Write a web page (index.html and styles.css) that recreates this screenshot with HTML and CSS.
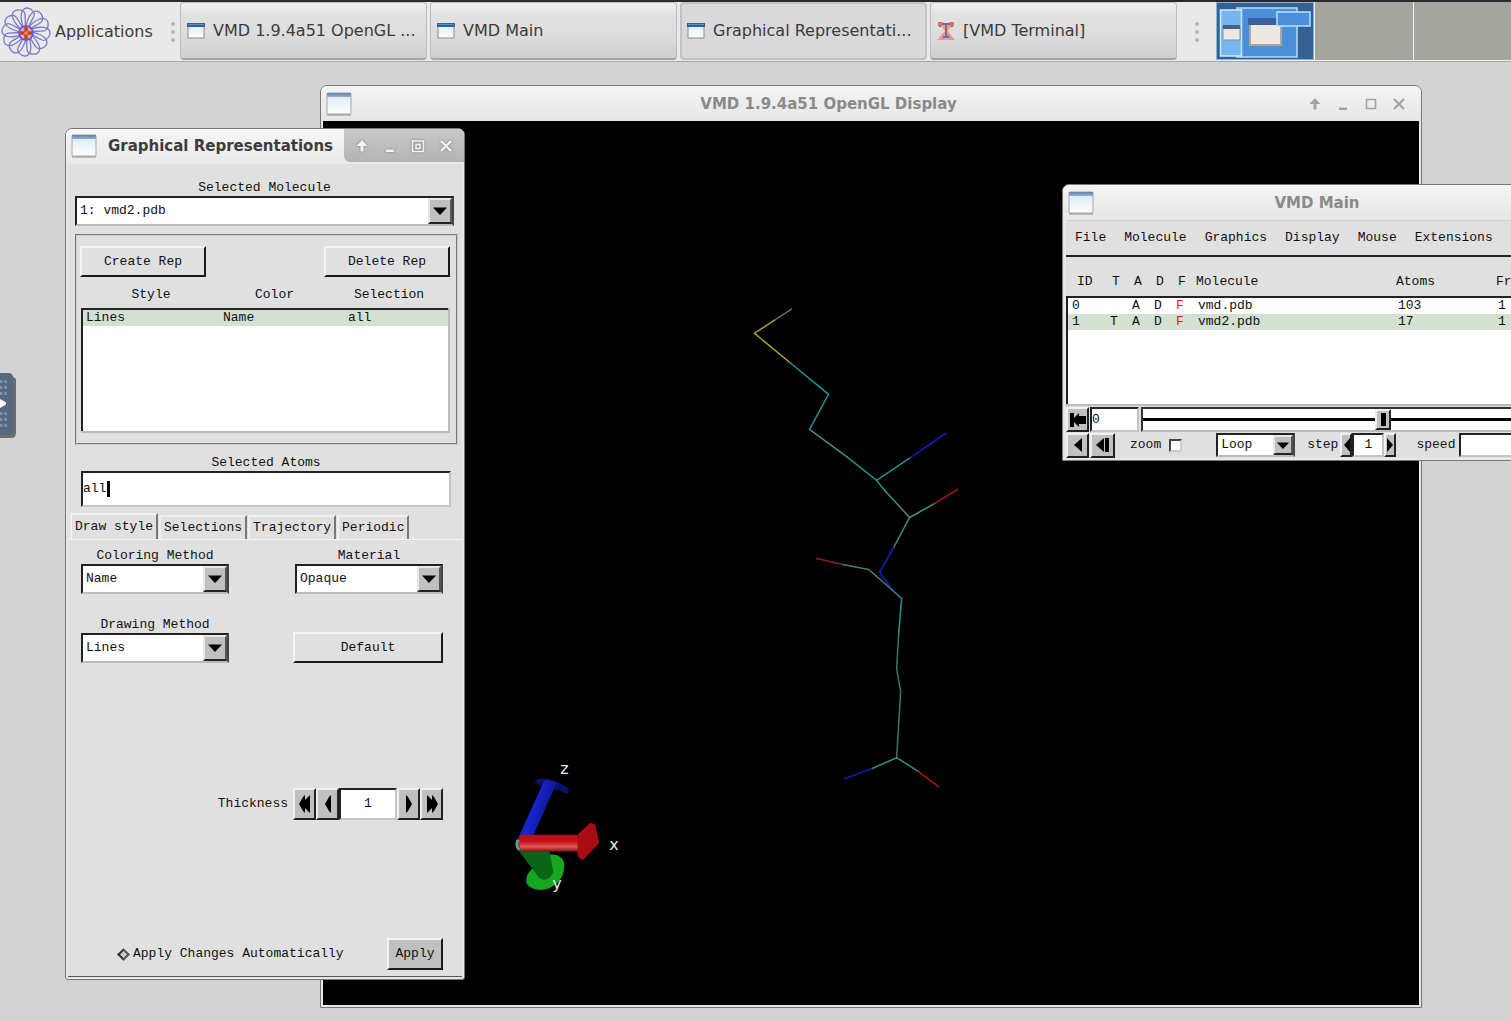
FILE: index.html
```html
<!DOCTYPE html>
<html lang="en">
<head>
<meta charset="utf-8">
<title>VMD Desktop</title>
<link rel="stylesheet" href="styles.css">
</head>
<body>
<svg class="defs" width="0" height="0" aria-hidden="true">
  <defs>
    <linearGradient id="glass" x1="0" y1="0" x2="0" y2="1"><stop offset="0" stop-color="#d8ecf6"/><stop offset="1" stop-color="#fdfdfc"/></linearGradient>
    <linearGradient id="winbar" x1="0" y1="0" x2="0" y2="1"><stop offset="0" stop-color="#5f82ad"/><stop offset="1" stop-color="#9ab0cc"/></linearGradient>
    <symbol id="win-small" viewBox="0 0 18 16"><rect x="1" y="1" width="16" height="14" fill="url(#glass)" stroke="#8c8c88"/><rect x="0" y="0" width="18" height="4" fill="#33628f"/><rect x="1" y="1" width="16" height="1" fill="#5d91c0"/></symbol>
    <symbol id="win-large" viewBox="0 0 26 24"><rect x="1" y="1" width="24" height="21" rx="1" fill="url(#glass)" stroke="#a5a7a4"/><rect x="1" y="1" width="24" height="4" fill="url(#winbar)"/><path d="M1 23h24" stroke="#8b8d8a"/></symbol>
    <symbol id="shade" viewBox="0 0 14 14"><path d="M7 1 1.500 7h4v5.500h3V7h4Z" fill="currentColor"/></symbol>
    <symbol id="minimize" viewBox="0 0 14 14"><path d="M3 10.500h8v2.500H3z" fill="currentColor"/></symbol>
    <symbol id="maximize" viewBox="0 0 14 14"><path d="M2.500 2.500h9v9h-9z" fill="none" stroke="currentColor" stroke-width="1.500"/></symbol>
    <symbol id="restore" viewBox="0 0 14 14"><path d="M1.500 2h11v10.500h-11zM5 5.500h4v4H5z" fill="none" stroke="currentColor" stroke-width="1.500"/></symbol>
    <symbol id="close" viewBox="0 0 14 14"><path d="m2 2 10 10m0-10L2 12" fill="none" stroke="currentColor" stroke-width="2.300"/></symbol>
    <symbol id="drop" viewBox="0 0 16 10"><path d="M1 1.500h14L8 9Z" fill="#000"/></symbol>
    <symbol id="prev" viewBox="0 0 8 20"><path d="M7 1v18L5 17 1 10 5 3Z" fill="#000"/></symbol>
    <symbol id="next" viewBox="0 0 8 20"><path d="M1 1v18l2-2 4-7-4-7Z" fill="#000"/></symbol>
    <symbol id="first" viewBox="0 0 12 20"><path d="M6 1v5l5-5v18l-5-5v5L4 17 0 10 4 3Z" fill="#000"/></symbol>
    <symbol id="last" viewBox="0 0 12 20"><path d="M6 1v5L1 1v18l5-5v5l2-2 4-7-4-7Z" fill="#000"/></symbol>
  </defs>
</svg>

<header class="panel">
  <button class="apps" type="button">
    <svg class="apps-logo" viewBox="0 0 52 50" aria-hidden="true">
      <g fill="none" stroke="#7b7ac8" stroke-width="1.300">
        <path id="petal" d="M26 25C20 16 20 5 24 2s12 2 10 7-6 10-8 16"/>
        <use href="#petal" transform="rotate(30 26 25)"/><use href="#petal" transform="rotate(60 26 25)"/><use href="#petal" transform="rotate(90 26 25)"/><use href="#petal" transform="rotate(120 26 25)"/><use href="#petal" transform="rotate(150 26 25)"/><use href="#petal" transform="rotate(180 26 25)"/><use href="#petal" transform="rotate(210 26 25)"/><use href="#petal" transform="rotate(240 26 25)"/><use href="#petal" transform="rotate(270 26 25)"/><use href="#petal" transform="rotate(300 26 25)"/><use href="#petal" transform="rotate(330 26 25)"/>
      </g>
      <circle cx="26" cy="26" r="7" fill="#e3a5b5" stroke="#5553d8" stroke-width="1.500"/>
      <path d="M26 20v12M20 26h12" stroke="#c2402c" stroke-width="3.500"/><circle cx="26" cy="26" r="2" fill="#e88b2c"/>
    </svg>
    <span>Applications</span>
  </button>
  <span class="grip"><i></i><i></i><i></i></span>
  <nav class="tasks" aria-label="Windows">
    <button class="task" type="button"><svg width="18" height="16"><use href="#win-small"/></svg><span>VMD 1.9.4a51 OpenGL ...</span></button>
    <button class="task" type="button"><svg width="18" height="16"><use href="#win-small"/></svg><span>VMD Main</span></button>
    <button class="task active" type="button"><svg width="18" height="16"><use href="#win-small"/></svg><span>Graphical Representati...</span></button>
    <button class="task" type="button"><svg width="18" height="20" viewBox="0 0 18 20"><path d="M1 1l7 9-7 9h5l3-5 3 5h5l-6-9 6-9h-5L9 6 6 1Z" fill="#f0a36c"/><path d="M0 19l6-7h6l6 7Z" fill="#e58b9c" opacity=".6"/><path d="M2 2h14v4h-2l-1-2h-3v11h2v2H6v-2h2V4H5L4 6H2Z" fill="#7069b4"/><path d="M1 1h4v4H1zM13 1h4v4h-4z" fill="#e06a6a"/></svg><span>[VMD Terminal]</span></button>
  </nav>
  <span class="grip"><i></i><i></i><i></i></span>
  <div class="pager">
    <button class="desk current" type="button" aria-label="Workspace 1">
      <svg viewBox="0 0 98 57" width="98" height="57">
        <path d="M20 5h60v49H20z" fill="#4a90d9" stroke="#b4dcfa" stroke-width="1.500"/>
        <path d="M3.500 7h21v46h-21z" fill="#78b4ee" stroke="#d0eaff" stroke-width="1.500"/>
        <path d="M6 23h17v14H6z" fill="#ece8e2" stroke="#8793a4"/><path d="M6 22h17v4H6z" fill="#41618f"/>
        <path d="M33 17h31v25H33z" fill="#ece7e1" stroke="#a9a59f" stroke-width="2"/><path d="M31 15h34v7H31z" fill="#395f9f"/>
        <path d="M60 9h33v14H60z" fill="#4a90d9" stroke="#b9e0ff" stroke-width="1.500"/>
      </svg>
    </button>
    <button class="desk" type="button" aria-label="Workspace 2"></button>
    <button class="desk" type="button" aria-label="Workspace 3"></button>
  </div>
</header>

<main class="desktop">
  <section class="window display" aria-label="OpenGL Display">
    <div class="titlebar">
      <svg width="26" height="24"><use href="#win-large"/></svg>
      <h2>VMD 1.9.4a51 OpenGL Display</h2>
      <div class="controls">
        <button type="button" aria-label="Shade"><svg><use href="#shade"/></svg></button>
        <button type="button" aria-label="Minimize"><svg><use href="#minimize"/></svg></button>
        <button type="button" aria-label="Maximize"><svg><use href="#maximize"/></svg></button>
        <button type="button" aria-label="Close"><svg><use href="#close"/></svg></button>
      </div>
    </div>
    <svg class="scene" viewBox="323 121 1096 883" preserveAspectRatio="xMinYMin slice">
      <defs>
        <linearGradient id="red" x1="0" y1="0" x2="0" y2="1"><stop offset="0" stop-color="#ad1016"/><stop offset=".4" stop-color="#cb1016"/><stop offset=".7" stop-color="#dc5a5a"/><stop offset="1" stop-color="#7c0a0e"/></linearGradient>
        <linearGradient id="blue" x1="0" y1="0" x2="1" y2=".5"><stop offset="0" stop-color="#0a1280"/><stop offset=".5" stop-color="#1825cc"/><stop offset="1" stop-color="#0a1280"/></linearGradient>
      </defs>
      <g fill="none" stroke-width="1.500" stroke-linecap="round">
        <path d="m791 309-17 11" stroke="#4b7670"/>
        <path d="m774 320-20 13 35 29" stroke="#b2a136"/>
        <path d="m789 362 39 32-19 35" stroke="#238f91"/>
        <path d="m809 429 38 28" stroke="#4d8980"/>
        <path d="m847 457 29 23 34-23M876 480l9 11" stroke="#23908f"/>
        <path d="m910 457 35-24" stroke="#14149c" stroke-width="2"/>
        <path d="m885 491 24 26 25-14M909 517l-16 30" stroke="#4b8b7e"/>
        <path d="m934 503 23-14" stroke="#a91c22"/>
        <path d="m893 547-14 25 12 16" stroke="#171a91" stroke-width="2"/>
        <path d="m816 558 26 6" stroke="#8f1d22"/>
        <path d="m842 564 26 5 23 20" stroke="#457c6d"/>
        <path d="m891 589 10 9-3 36" stroke="#259193"/>
        <path d="m898 634-2 34 4 23-4 66" stroke="#3e7565"/>
        <path d="m896 757-25 11M896 757l22 14" stroke="#348c85"/>
        <path d="m871 768-27 10" stroke="#1717b5"/>
        <path d="m918 771 20 15" stroke="#c01616"/>
      </g>
      <path d="M534 781q10-9 35 7l-2 5-10-4-10 1Z" fill="#0a106c"/>
      <path d="m517 839 27-59q8-2 12 3l-26 59Z" fill="url(#blue)"/>
      <path d="M526 880c0-9 7-12 12-18l10-8c9-2 17 3 16 12-1 15-13 24-26 23-7-1-12-4-12-9Z" fill="#17a620"/>
      <path d="m517 848 32 2 4 21c-2 7-10 11-15 5Z" fill="#086616"/>
      <path d="M520 834h58v17h-56q-6-8-2-17Z" fill="url(#red)"/>
      <path d="m578 833 12-11 5 2 4 18-16 17q-5 0-6-7Z" fill="#a80d13"/>
      <path d="M518 839q-3 5 1 10" stroke="#739a94" stroke-width="3" fill="none"/>
      <g class="axis"><text x="560" y="773">z</text><text x="609" y="849">x</text><text x="552" y="888">y</text></g>
    </svg>
  </section>

  <section class="window vmd-main" aria-label="VMD Main">
    <div class="titlebar">
      <svg width="26" height="24"><use href="#win-large"/></svg>
      <h2>VMD Main</h2>
      <div class="controls">
        <button type="button" aria-label="Shade"><svg><use href="#shade"/></svg></button>
        <button type="button" aria-label="Minimize"><svg><use href="#minimize"/></svg></button>
        <button type="button" aria-label="Maximize"><svg><use href="#maximize"/></svg></button>
        <button type="button" aria-label="Close"><svg><use href="#close"/></svg></button>
      </div>
    </div>
    <div class="main-body">
      <nav class="menubar"><button type="button">File</button><button type="button">Molecule</button><button type="button">Graphics</button><button type="button">Display</button><button type="button">Mouse</button><button type="button">Extensions</button></nav>
      <table class="mols">
        <colgroup><col class="c-id"><col class="c-flag"><col class="c-flag"><col class="c-flag"><col class="c-flag"><col class="c-mol"><col class="c-atoms"><col></colgroup>
        <thead><tr><th>ID</th><th>T</th><th>A</th><th>D</th><th>F</th><th>Molecule</th><th>Atoms</th><th>Frames</th></tr></thead>
        <tbody>
          <tr><td>0</td><td></td><td>A</td><td>D</td><td class="fixed">F</td><td>vmd.pdb</td><td>103</td><td>1</td></tr>
          <tr class="selected"><td>1</td><td>T</td><td>A</td><td>D</td><td class="fixed">F</td><td>vmd2.pdb</td><td>17</td><td>1</td></tr>
          <tr class="filler"><td colspan="8"></td></tr>
        </tbody>
      </table>
      <div class="frame-row">
        <button class="key" type="button" aria-label="Jump to start"><svg width="16" height="14" viewBox="0 0 16 14"><path d="M0 0h4v5l5-5v3h7v8H9v3L4 9v5H0Z"/></svg></button>
        <input class="field frame" type="text" value="0" aria-label="Frame">
        <input class="slider" type="range" min="0" max="200" value="99" aria-label="Frame slider">
        <button class="key" type="button" aria-label="Jump to end"><svg width="16" height="14" viewBox="0 0 16 14"><path d="M16 0h-4v5L7 0v3H0v8h7v3l5-5v5h4Z"/></svg></button>
      </div>
      <div class="play-row">
        <button class="key" type="button" aria-label="Play reverse"><svg width="8" height="14" viewBox="0 0 8 14"><path d="M8 0v14L0 7Z"/></svg></button>
        <button class="key step-key" type="button" aria-label="Step reverse"><svg width="13" height="14" viewBox="0 0 13 14"><path d="M8 0v14L0 7ZM9 0h4v14H9Z"/></svg></button>
        <label class="zoom">zoom <input type="checkbox"></label>
        <div class="combo loop"><select aria-label="Loop mode"><option>Loop</option></select><span class="drop"><svg width="14" height="9"><use href="#drop"/></svg></span></div>
        <label for="step">step</label>
        <div class="stepper">
          <button class="key" type="button" aria-label="Decrease step"><svg width="7" height="14" viewBox="0 0 7 14"><path d="M7 0v14L1 7Z"/></svg></button>
          <input id="step" class="field" type="text" value="1">
          <button class="key" type="button" aria-label="Increase step"><svg width="7" height="14" viewBox="0 0 7 14"><path d="M0 0v14l6-7Z"/></svg></button>
        </div>
        <label class="speed">speed <input class="field" type="text"></label>
      </div>
    </div>
  </section>

  <section class="window reps" aria-label="Graphical Representations">
    <div class="titlebar focused">
      <svg width="26" height="24"><use href="#win-large"/></svg>
      <h2>Graphical Representations</h2>
      <div class="controls">
        <button type="button" aria-label="Shade"><svg><use href="#shade"/></svg></button>
        <button type="button" aria-label="Minimize"><svg><use href="#minimize"/></svg></button>
        <button type="button" aria-label="Maximize"><svg><use href="#restore"/></svg></button>
        <button type="button" aria-label="Close"><svg><use href="#close"/></svg></button>
      </div>
    </div>
    <div class="reps-body">
      <div class="labelled molecule">
        <label for="mol">Selected Molecule</label>
        <div class="combo"><select id="mol"><option>1: vmd2.pdb</option></select><span class="drop"><svg width="16" height="10"><use href="#drop"/></svg></span></div>
      </div>
      <div class="group">
        <div class="spread"><button class="btn" type="button">Create Rep</button><button class="btn" type="button">Delete Rep</button></div>
        <table class="rep-table">
          <colgroup><col class="c-style"><col class="c-color"><col></colgroup>
          <thead><tr><th>Style</th><th>Color</th><th>Selection</th></tr></thead>
          <tbody><tr class="selected"><td>Lines</td><td>Name</td><td>all</td></tr><tr class="filler"><td colspan="3"></td></tr></tbody>
        </table>
      </div>
      <div class="labelled atoms">
        <label for="atoms">Selected Atoms</label>
        <div class="field entry"><input id="atoms" type="text" value="all" size="3"><i class="caret"></i></div>
      </div>
      <div class="tabs" role="tablist">
        <button class="on" type="button" role="tab" aria-selected="true">Draw style</button><button type="button" role="tab">Selections</button><button type="button" role="tab">Trajectory</button><button type="button" role="tab">Periodic</button>
      </div>
      <div class="tab-page">
        <div class="spread">
          <div class="labelled small"><label for="coloring">Coloring Method</label><div class="combo"><select id="coloring"><option>Name</option></select><span class="drop"><svg width="16" height="10"><use href="#drop"/></svg></span></div></div>
          <div class="labelled small"><label for="material">Material</label><div class="combo"><select id="material"><option>Opaque</option></select><span class="drop"><svg width="16" height="10"><use href="#drop"/></svg></span></div></div>
        </div>
        <div class="spread bottom">
          <div class="labelled small"><label for="drawing">Drawing Method</label><div class="combo"><select id="drawing"><option>Lines</option></select><span class="drop"><svg width="16" height="10"><use href="#drop"/></svg></span></div></div>
          <button class="btn default" type="button">Default</button>
        </div>
        <div class="thickness">
          <label for="thick">Thickness</label>
          <div class="counter">
            <button class="key" type="button" aria-label="Much thinner"><svg width="12" height="20"><use href="#first"/></svg></button>
            <button class="key" type="button" aria-label="Thinner"><svg width="8" height="20"><use href="#prev"/></svg></button>
            <input id="thick" class="field" type="text" value="1">
            <button class="key" type="button" aria-label="Thicker"><svg width="8" height="20"><use href="#next"/></svg></button>
            <button class="key" type="button" aria-label="Much thicker"><svg width="12" height="20"><use href="#last"/></svg></button>
          </div>
        </div>
        <div class="apply-row">
          <label><input type="checkbox">Apply Changes Automatically</label>
          <button class="btn apply" type="button">Apply</button>
        </div>
      </div>
    </div>
  </section>

  <button class="dock-handle" type="button" aria-label="Open control bar">
    <svg width="16" height="66" viewBox="0 0 16 66"><path d="M0 3h12l4 3v54q0 5-5 5H0Z" fill="#6d6d6d"/><path d="M0 0h8q5 0 5 5v52q0 5-5 5H0Z" fill="#54687f"/><g stroke="#8495a7" stroke-width="2.500" stroke-dasharray="3 3"><path d="M1 7v15M5.500 7v15M1 39v15M5.500 39v15"/></g><path d="M0 26l6 3.500v2L0 35Z" fill="#fff"/></svg>
  </button>
</main>
</body>
</html>
```
FILE: styles.css
```css
* { box-sizing: border-box; }

body {
  margin: 0;
  height: 100vh;
  overflow: hidden;
  display: flex;
  flex-direction: column;
  background: #d3d3d3;
  color: #111;
  font: 13px/16px "Liberation Mono", monospace;
}

button, input, select { font: inherit; color: inherit; margin: 0; padding: 0; border: 0; border-radius: 0; background: none; }
select { appearance: none; min-width: 0; }
svg { display: block; flex: none; }
.defs { position: absolute; }

/* Desktop panel */
.panel {
  display: flex;
  flex: none;
  height: 62px;
  border-top: 2px solid #2c282d;
  border-bottom: 1px solid #a6a6a2;
  background: #e9e9e9;
  font: 16px/20px "DejaVu Sans", sans-serif;
  color: #3b3b3b;
}
.apps { display: flex; align-items: center; gap: 3px; width: 168px; flex: none; }
.apps-logo { width: 52px; height: 50px; }
.grip { display: flex; flex-direction: column; justify-content: center; gap: 4px; width: 10px; flex: none; align-items: center; }
.grip i { width: 4px; height: 4px; border-radius: 2px; background: #b5b5b1; }
.tasks { display: flex; gap: 3px; padding: 0 0 1px 2px; }
.task {
  display: flex;
  align-items: center;
  gap: 8px;
  width: 247px;
  padding: 0 6px;
  border: 1px solid #bcbcba;
  border-bottom: 2px solid #a5a5a3;
  border-radius: 4px;
  background: linear-gradient(#efefef, #e2e2e2 20%, #dcdcdc 60%, #cfcfcf);
  white-space: nowrap;
  overflow: hidden;
}
.task.active { background: #d9d9d9; border: 2px solid #c2c2c0; padding: 0 5px; }
.tasks + .grip { width: 39px; }
.pager { display: flex; gap: 1px; flex: 1; min-width: 0; overflow: hidden; background: #eee; }
.desk { width: 98px; flex: none; background: #a4a59e; margin-bottom: 1px; }
.desk.current { background: #366092; border: 1px solid #80b6e2; }

/* Window frames */
.desktop { flex: 1; min-height: 0; }
.window {
  position: absolute;
  display: flex;
  flex-direction: column;
  padding: 0 2px 2px;
  border: 1px solid #777;
  border-radius: 7px 7px 0 0;
  background: #e8e8e8;
  overflow: hidden;
}
.display { left: 320px; right: 89px; top: 85px; bottom: 13px; }
.vmd-main { left: 1062px; width: 595px; top: 184px; }
.reps { left: 65px; width: 400px; top: 128px; border-bottom-left-radius: 3px; border-bottom-right-radius: 3px; }

.titlebar {
  display: flex;
  align-items: center;
  flex: none;
  height: 35px;
  margin: 0 -2px;
  padding-left: 5px;
  background: linear-gradient(#f4f4f4, #e6e6e6);
  color: #8a8a88;
}
.titlebar h2 { flex: 1; margin: 0; text-align: center; font: bold 15px/20px "DejaVu Sans", sans-serif; white-space: nowrap; }
.controls { display: flex; align-items: center; gap: 8px; padding-right: 12px; color: #a3a3a1; }
.controls button { width: 20px; height: 20px; display: grid; place-items: center; }
.controls svg { width: 14px; height: 14px; }
.focused { color: #3c3c3c; align-items: flex-start; background: linear-gradient(#f6f6f6, #e9e9e9); }
.focused > svg { margin-top: 5px; }
.focused h2 { margin-top: 7px; }
.focused .controls { height: 33px; padding: 0 8px; background: linear-gradient(#c9c9c9, #b3b3b3); color: #f4f4f4; border-bottom-left-radius: 6px; }
.focused .controls svg { filter: drop-shadow(0 0 1px #777); }

.scene { flex: 1; width: 100%; min-height: 0; background: #000; }
.axis { fill: #e8e8e8; font: 16px "DejaVu Sans", sans-serif; }

/* Shared toolkit widgets */
.btn { border: 2px solid; border-color: #f4f4f4 #1a1a1a #1a1a1a #f4f4f4; background: #e0e0e0; height: 31px; width: 126px; }
.key { display: grid; place-items: center; flex: none; border: 2px solid; border-color: #f0f0f0 #222 #222 #f0f0f0; background: #c0c0c0; }
.field { border: 2px solid; border-color: #222 #c4c4c4 #c4c4c4 #222; background: #fff; min-width: 0; }
.combo { display: flex; height: 30px; border: 2px solid; border-color: #222 #444 #bbb #222; background: #fff; }
.combo select { flex: 1; padding-left: 3px; }
.drop { display: grid; place-items: center; width: 24px; border: 2px solid; border-color: #e8e8e8 #555 #222 #e8e8e8; background: #c0c0c0; }
table { width: 100%; border-collapse: collapse; table-layout: fixed; }
th, td { padding: 0 0 0 3px; font-weight: normal; text-align: left; white-space: nowrap; height: 16px; }
tbody { border: 2px solid; border-color: #222 #bbb #bbb #222; background: #fff; }
.selected { background: #d3e1d3; }

/* Graphical Representations */
.reps-body { background: #e0e0e0; border-bottom: 1px solid #555; padding: 16px 0 0; }
.labelled { display: flex; flex-direction: column; text-align: center; }
.molecule { margin: 0 8px 0 7px; }
.spread { display: flex; justify-content: space-between; }
.group { margin: 8px 4px 0 7px; padding: 10px 6px 10px 3px; border: 2px groove #ccc; }
.rep-table { margin: 10px 0 0 1px; width: 369px; }
.rep-table th { text-align: center; height: 22px; vertical-align: top; padding: 0; }
.rep-table .filler td { height: 106px; }
.rep-table .selected td:last-child { padding-left: 19px; }
.c-style { width: 138px; }
.c-color { width: 109px; }
.atoms { margin: 10px 11px 0 13px; }
.entry { display: flex; align-items: center; height: 36px; }
.entry input { width: 24px; outline: 0; }
.caret { width: 3px; height: 16px; background: #000; }
.tabs { display: flex; align-items: flex-end; gap: 1px; height: 32px; padding-left: 2px; }
.tabs button { height: 24px; padding: 0 3px 1px; border: 2px solid #efefef; border-right-color: #777; border-bottom: 0; }
.tabs .on { height: 26px; }
.tab-page { border-top: 1px solid #f4f4f4; padding: 8px 19px 6px 13px; }
.small { width: 148px; }
.bottom { align-items: flex-end; margin-top: 23px; }
.default { width: 150px; }
.thickness { display: flex; justify-content: flex-end; align-items: center; gap: 5px; margin-top: 125px; }
.counter { display: flex; height: 32px; }
.counter .key { width: 23px; }
.counter .field { width: 58px; text-align: center; }
.apply-row { display: flex; align-items: center; justify-content: space-between; margin-top: 118px; padding-left: 38px; }
.apply-row label { display: flex; align-items: center; gap: 5px; }
.apply-row input { appearance: none; width: 9px; height: 9px; border: 2px solid; border-color: #555 #555 #333 #333; background: #ccc; transform: rotate(45deg); }
.apply { width: 56px; height: 32px; background: #c0c0c0; }

/* VMD Main */
.main-body { background: #e0e0e0; margin-left: 1px; }
.menubar { display: flex; gap: 18px; height: 37px; padding-left: 9px; border-top: 1px solid #cfcfcf; border-bottom: 2px solid #222; }
.mols { margin-top: 17px; }
.mols th { height: 23px; vertical-align: top; padding-left: 4px; }
.mols th:nth-child(1) { padding-left: 10px; }
.mols th:nth-child(n+6) { padding-left: 0; }
.mols td { padding-left: 2px; }
.mols td:first-child { padding-left: 4px; }
.mols .filler td { height: 75px; }
.c-id { width: 41px; }
.c-flag { width: 22px; }
.c-mol { width: 200px; }
.c-atoms { width: 100px; }
.fixed { color: #e8141c; }
.frame-row { display: flex; height: 25px; gap: 1px; margin-top: 1px; }
.frame-row .key, .play-row > .key { width: 23px; }
.frame { width: 49px; padding: 0; }
.slider { appearance: none; flex: 1; min-width: 0; margin-left: 1px; border: 2px solid; border-color: #333 #bbb #bbb #333; background: linear-gradient(#000, #000) center / 100% 3px no-repeat #fff; }
.slider::-webkit-slider-thumb { appearance: none; width: 16px; height: 21px; border: 2px solid; border-color: #eee #222 #222 #eee; background: linear-gradient(#000, #000) center / 5px 13px no-repeat #c0c0c0; }
.play-row { display: flex; align-items: center; height: 26px; }
.play-row > .key { height: 25px; margin-right: 1px; }
.play-row > .step-key { width: 25px; }
.zoom { display: flex; align-items: center; gap: 8px; margin-left: 14px; }
.zoom input { appearance: none; width: 13px; height: 13px; border: 2px solid; border-color: #444 #ccc #ccc #444; background: #fff; }
.loop { width: 79px; height: 24px; margin: 0 12px 0 34px; }
.loop .drop { width: 20px; }
.stepper { display: flex; height: 24px; margin-left: 2px; }
.stepper .key { width: 12px; }
.stepper .field { width: 32px; text-align: center; }
.speed { display: flex; align-items: center; gap: 4px; flex: 1; min-width: 0; margin-left: 20px; }
.speed .field { flex: 1; height: 24px; }

/* Remote session drawer handle */
.dock-handle { position: absolute; left: 0; top: 373px; }
```
